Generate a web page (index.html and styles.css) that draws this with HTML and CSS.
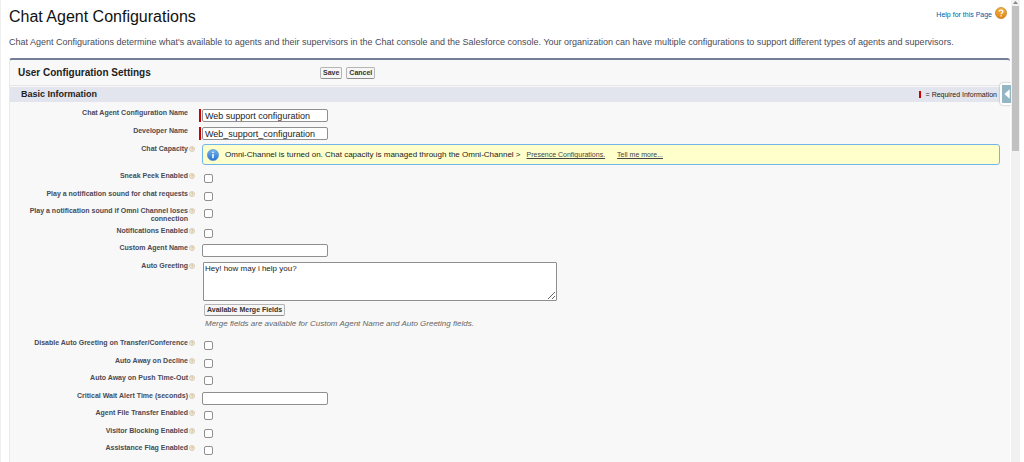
FILE: index.html
```html
<!DOCTYPE html>
<html lang="en">
<head>
<meta charset="utf-8">
<title>Chat Agent Configurations</title>
<link rel="stylesheet" href="styles.css">
</head>
<body>
<svg class="defs" aria-hidden="true">
  <symbol id="hint" viewBox="0 0 6 6">
    <circle cx="3" cy="3" r="2.6" fill="#f3ead8" stroke="#cfc5b0" stroke-width=".7"/>
    <path d="M2.1 2.4C2.2 1.5 3.9 1.5 3.9 2.5C3.9 3.1 3 3.1 3 3.8M3 4.3V4.8" fill="none" stroke="#c3a878" stroke-width=".7"/>
  </symbol>
</svg>
<div class="window">
  <main class="page">
    <header class="page-head">
      <h1 class="title">Chat Agent Configurations</h1>
      <a class="help" href="#"><span class="help-text">Help for this Page</span>
        <svg class="help-icon" viewBox="0 0 12 12" aria-hidden="true">
          <defs><linearGradient id="amber" x2="0" y2="1"><stop stop-color="#f6b548"/><stop offset="1" stop-color="#df8410"/></linearGradient></defs>
          <circle cx="6" cy="6" r="5.5" fill="url(#amber)" stroke="#bd7a1b" stroke-width=".7"/>
          <path d="M4.2 4.6C4.2 2.5 7.9 2.5 7.9 4.6C7.9 5.9 6.1 5.8 6.1 7.2M6.1 8.2V9.5" fill="none" stroke="#fff" stroke-width="1.3"/>
        </svg>
      </a>
    </header>
    <p class="intro">Chat Agent Configurations determine what's available to agents and their supervisors in the Chat console and the Salesforce console. Your organization can have multiple configurations to support different types of agents and supervisors.</p>
    <form class="panel">
      <div class="panel-head">
        <h2 class="panel-title">User Configuration Settings</h2>
        <div class="actions">
          <button class="btn" type="button">Save</button>
          <button class="btn" type="button">Cancel</button>
        </div>
      </div>
      <div class="section-head">
        <h3 class="section-title">Basic Information</h3>
        <span class="legend"><span class="legend-mark"></span>= Required Information</span>
        <button class="side-tab" type="button" aria-label="Open sidebar"><svg class="side-arrow" viewBox="0 0 8 17"><path d="M7 4V13L2 8.5Z" fill="#fff"/></svg></button>
      </div>
      <div class="fields">
        <div class="row"><label class="label" for="name">Chat Agent Configuration Name</label><div class="control required"><input class="text" id="name" type="text" value="Web support configuration"></div></div>
        <div class="row"><label class="label" for="dev">Developer Name</label><div class="control required"><input class="text" id="dev" type="text" value="Web_support_configuration"></div></div>
        <div class="row capacity"><span class="label">Chat Capacity</span><svg class="hint"><use href="#hint"/></svg>
          <div class="control notice">
            <svg class="info" viewBox="0 0 12 12" aria-hidden="true"><defs><linearGradient id="blue" x2="0" y2="1"><stop stop-color="#79b9ee"/><stop offset="1" stop-color="#2470cf"/></linearGradient></defs><circle cx="6" cy="6" r="5.6" fill="url(#blue)" stroke="#4b8fce" stroke-width=".6"/><path d="M6 5V9.3M6 2.7V4" stroke="#fff" stroke-width="1.5"/></svg>
            <span>Omni-Channel is turned on. Chat capacity is managed through the Omni-Channel &gt;</span>
            <a class="notice-link" href="#">Presence Configurations.</a>
            <a class="notice-link more" href="#">Tell me more...</a>
          </div>
        </div>
        <div class="row"><label class="label" for="sneak">Sneak Peek Enabled</label><svg class="hint"><use href="#hint"/></svg><div class="control"><input class="check" id="sneak" type="checkbox"></div></div>
        <div class="row short"><label class="label" for="sound">Play a notification sound for chat requests</label><svg class="hint"><use href="#hint"/></svg><div class="control"><input class="check" id="sound" type="checkbox"></div></div>
        <div class="row double"><label class="label" for="lost">Play a notification sound if Omni Channel loses connection</label><svg class="hint"><use href="#hint"/></svg><div class="control"><input class="check" id="lost" type="checkbox"></div></div>
        <div class="row short"><label class="label" for="notify">Notifications Enabled</label><svg class="hint"><use href="#hint"/></svg><div class="control"><input class="check" id="notify" type="checkbox"></div></div>
        <div class="row"><label class="label" for="agent">Custom Agent Name</label><svg class="hint"><use href="#hint"/></svg><div class="control"><input class="text" id="agent" type="text"></div></div>
        <div class="row greeting"><label class="label" for="greet">Auto Greeting</label><svg class="hint"><use href="#hint"/></svg>
          <div class="control stack">
            <textarea class="area" id="greet">Hey! how may i help you?</textarea>
            <button class="btn merge" type="button">Available Merge Fields</button>
            <p class="note">Merge fields are available for Custom Agent Name and Auto Greeting fields.</p>
          </div>
        </div>
        <div class="row"><label class="label" for="disable">Disable Auto Greeting on Transfer/Conference</label><svg class="hint"><use href="#hint"/></svg><div class="control"><input class="check" id="disable" type="checkbox"></div></div>
        <div class="row short"><label class="label" for="decline">Auto Away on Decline</label><svg class="hint"><use href="#hint"/></svg><div class="control"><input class="check" id="decline" type="checkbox"></div></div>
        <div class="row"><label class="label" for="push">Auto Away on Push Time-Out</label><svg class="hint"><use href="#hint"/></svg><div class="control"><input class="check" id="push" type="checkbox"></div></div>
        <div class="row short"><label class="label" for="wait">Critical Wait Alert Time (seconds)</label><svg class="hint"><use href="#hint"/></svg><div class="control"><input class="text" id="wait" type="text"></div></div>
        <div class="row"><label class="label" for="file">Agent File Transfer Enabled</label><svg class="hint"><use href="#hint"/></svg><div class="control"><input class="check" id="file" type="checkbox"></div></div>
        <div class="row short"><label class="label" for="block">Visitor Blocking Enabled</label><svg class="hint"><use href="#hint"/></svg><div class="control"><input class="check" id="block" type="checkbox"></div></div>
        <div class="row"><label class="label" for="flag">Assistance Flag Enabled</label><svg class="hint"><use href="#hint"/></svg><div class="control"><input class="check" id="flag" type="checkbox"></div></div>
      </div>
    </form>
  </main>
  <div class="scrollbar" aria-hidden="true">
    <svg class="scroll-up" viewBox="0 0 9 6"><path d="M2 4H7L4.5 1Z" fill="#888"/></svg>
    <div class="thumb"></div>
  </div>
</div>
</body>
</html>
```

FILE: styles.css
```css
* { box-sizing: border-box; }
body { margin: 0; background: #fff; color: #222; font-family: "Liberation Sans", Arial, sans-serif; font-size: 8px; }
h1, h2, h3, p { margin: 0; }
.defs { display: none; }
.window { display: flex; height: 100vh; overflow: hidden; padding-right: 4px; border-left: 1px solid #f0f0f0; }
.page { flex: 1; min-width: 0; padding-left: 8px; overflow: hidden; }
.page-head { display: flex; justify-content: space-between; align-items: flex-start; height: 36px; padding: 7px 4px 0 0; }
.title { font-size: 16px; line-height: 20px; font-weight: 400; color: #111; }
.help { display: flex; align-items: flex-start; gap: 3px; font-size: 7px; line-height: 12px; color: #015ba7; text-decoration: none; }
.help-text { padding-top: 2px; }
.help-icon { width: 12px; height: 12px; }
.intro { font-size: 9px; line-height: 12px; color: #4a4a56; white-space: nowrap; }
.panel { margin: 10px 1px 0 0; border-top: 2px solid #747e96; border-left: 1px solid #eaeaea; border-radius: 3px 3px 0 0; background: #f8f8f8; }
.panel-head { display: grid; grid-template-columns: 302px 1fr; align-items: center; height: 26px; padding-left: 8px; border-bottom: 1px solid #e6e6e6; }
.panel-title { font-size: 10px; line-height: 12px; }
.actions { display: flex; gap: 4px; }
.btn { height: 12px; padding: 0 2px; border: 1px solid #b5b5b5; border-bottom-color: #8f8f8f; border-radius: 2px; background: #f6f6f6; color: #333; font: bold 7px/10px "Liberation Sans", Arial, sans-serif; }
.section-head { position: relative; display: flex; justify-content: space-between; align-items: center; height: 15px; margin-top: 1px; padding: 0 13px 1px 11px; background: #e3e5ee; }
.section-title { font-size: 9px; line-height: 12px; }
.legend { display: flex; align-items: center; gap: 5px; font-size: 7px; line-height: 9px; }
.legend-mark { width: 2px; height: 7px; background: #c00; }
.side-tab { position: absolute; top: -4px; right: -1px; width: 11px; height: 22px; padding: 2px 0 2px 2px; border: 0; border-radius: 3px 0 0 3px; background: #fff; box-shadow: 0 0 2px #999; }
.side-arrow { display: block; width: 9px; height: 18px; background: #93b5c4; }
.fields { padding: 5px 0 12px; }
.row { display: grid; grid-template-columns: 178px 8px 1fr; height: 18px; }
.row.short { height: 17px; }
.row.capacity { height: 27px; }
.row.double { height: 20px; }
.row.greeting { height: 77px; }
.label { padding-top: 2px; font-size: 7px; line-height: 8px; font-weight: 700; color: #4a4a56; text-align: right; }
.hint { width: 6px; height: 6px; margin: 3px 0 0 1px; }
.control { grid-column: 3; display: flex; align-items: flex-start; margin-left: 6px; padding-top: 2px; }
.required { margin-left: 3px; }
.required::before { content: ""; width: 2px; height: 13px; margin-right: 1px; background: #c00; }
.text { width: 126px; height: 13px; padding: 0 2px; border: 1px solid #8f8f8f; border-radius: 2px; background: #fff; color: #222; font: 9px/11px "Liberation Sans", Arial, sans-serif; }
.check { appearance: none; width: 9px; height: 9px; margin: 2px 0 0 2px; border: 1px solid #8f8f8f; border-radius: 2px; background: #fff; }
.notice { align-items: center; height: 21px; margin-right: 10px; margin-top: 1px; padding: 0 4px; border: 1px solid #6fb6ea; border-radius: 3px; background: #ffc; font-size: 8px; white-space: nowrap; }
.info { width: 12px; height: 12px; margin-right: 6px; }
.notice-link { margin-left: 6px; font-size: 7px; color: #444; }
.notice-link.more { margin-left: 12px; }
.stack { flex-direction: column; }
.area { width: 354px; height: 39px; margin-left: 1px; padding: 1px; border: 1px solid #8f8f8f; border-radius: 1px; color: #222; font: 8px/10px "Liberation Sans", Arial, sans-serif; resize: both; }
.merge { margin: 3px 0 0 2px; }
.note { margin: 3px 0 0 3px; line-height: 10px; font-style: italic; color: #666; }
.scrollbar { width: 9px; background: #f1f1f1; }
.scroll-up { display: block; width: 9px; height: 6px; }
.thumb { width: 7px; height: 145px; margin: 0 auto; background: #c1c1c1; }
```
